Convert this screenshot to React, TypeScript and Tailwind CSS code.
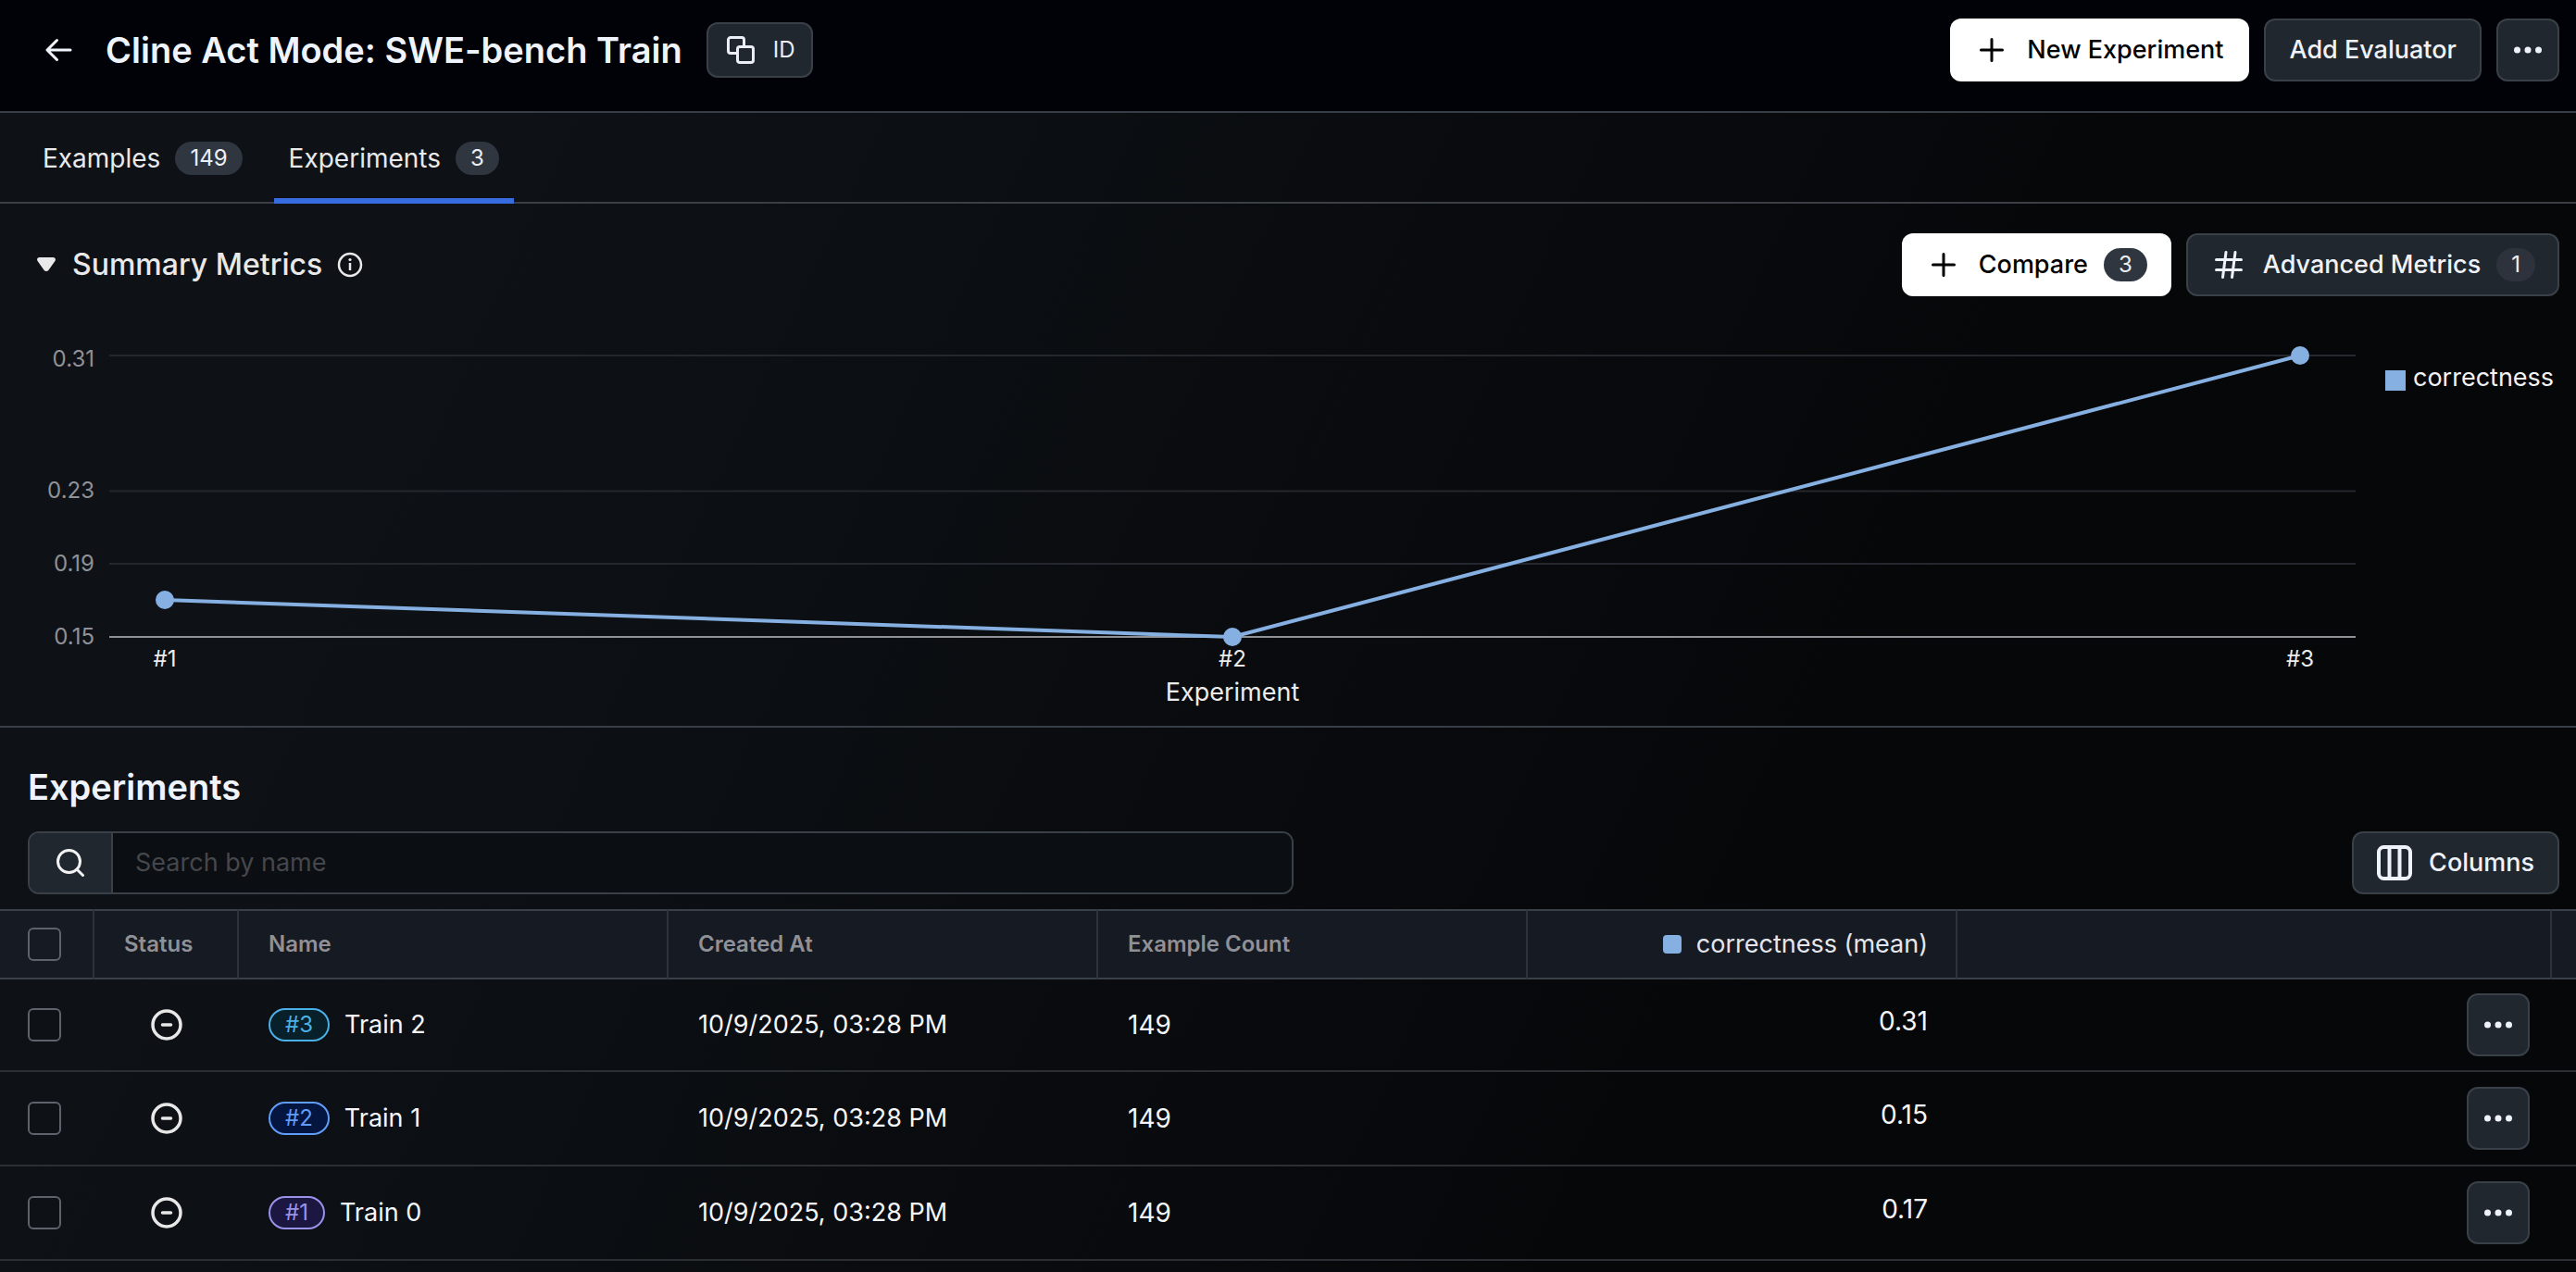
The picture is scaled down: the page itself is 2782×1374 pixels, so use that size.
import React from "react";

const rows = [
  { tag: "#3", name: "Train 2", score: "0.31", pill: "border-[#4cb0e8] bg-[#082029] text-[#4cb0e8]", h: "h-[100px]" },
  { tag: "#2", name: "Train 1", score: "0.15", pill: "border-[#609cf9] bg-[#04163f] text-[#609cf9]", h: "h-[102px]" },
  { tag: "#1", name: "Train 0", score: "0.17", pill: "border-[#9a92ea] bg-[#1b1740] text-[#9a92ea]", h: "h-[102px]" },
];

const dark =
  "flex h-[68px] items-center rounded-xl border-2 border-[#3a4048] bg-[#21272f] text-[27px] font-medium text-[#f0f2fa]";
const light = "flex h-[68px] items-center rounded-xl bg-white text-[27px] font-medium text-black";
const badge = "flex h-9 items-center justify-center rounded-full text-2xl font-normal text-[#eceef6]";

function Plus() {
  return (
    <svg width="26" height="26" viewBox="0 0 26 26" fill="none" stroke="currentColor" strokeWidth="3" strokeLinecap="round" aria-hidden="true">
      <path d="M13 1.5v23M1.5 13h23" />
    </svg>
  );
}

function Dots() {
  return (
    <svg width="30" height="8" viewBox="0 0 30 8" fill="currentColor" aria-hidden="true">
      <circle cx="3.500" cy="4" r="3.500" />
      <circle cx="15" cy="4" r="3.500" />
      <circle cx="26.500" cy="4" r="3.500" />
    </svg>
  );
}

function Check({ label }: { label: string }) {
  return (
    <input
      type="checkbox"
      aria-label={label}
      className="block size-9 appearance-none rounded-md border-2 border-[#5d626b] bg-transparent checked:bg-[#366ce0]"
    />
  );
}

function Header() {
  return (
    <header className="flex h-[122px] items-start justify-between border-b-2 border-[#383e45] bg-[#010207] pt-5 pr-[18px] pl-12">
      <div className="flex h-[68px] items-center">
        <button aria-label="Back" className="mr-9 text-[#f0f4fc]">
          <svg width="30" height="26" viewBox="0 0 30 26" fill="none" stroke="currentColor" strokeWidth="3" strokeLinecap="round" strokeLinejoin="round" aria-hidden="true">
            <path d="M28 13H3M13.500 2.500L3 13l10.500 10.500" />
          </svg>
        </button>
        <h1 className="text-[38px] font-semibold text-[#eff4fc]">Cline Act Mode: SWE-bench Train</h1>
        <button className="ml-[26px] flex h-[60px] items-center gap-5 rounded-xl border-2 border-[#3a4048] bg-[#21272f] pr-[18px] pl-5 text-2xl text-[#eceef6]">
          <svg width="30" height="30" viewBox="0 0 30 30" fill="none" stroke="currentColor" strokeWidth="3" strokeLinejoin="round" aria-hidden="true">
            <path d="M10.500 18.500H4a2.500 2.500 0 0 1-2.500-2.500V4A2.500 2.500 0 0 1 4 1.500h12A2.500 2.500 0 0 1 18.500 4v6.500" />
            <rect x="11.500" y="11.500" width="17" height="17" rx="2.500" />
          </svg>
          ID
        </button>
      </div>
      <div className="flex gap-4">
        <button className={`${light} gap-[25px] pr-7 pl-8`}>
          <Plus />
          New Experiment
        </button>
        <button className={`${dark} px-[25px]`}>Add Evaluator</button>
        <button aria-label="More actions" className={`${dark} w-[68px] justify-center`}>
          <Dots />
        </button>
      </div>
    </header>
  );
}

function Tabs() {
  return (
    <nav className="flex h-[98px] gap-[18px] border-b-2 border-[#3a3e45] pl-[30px] text-[28px] text-[#e9e9e9]">
      <a href="#examples" className="flex h-[98px] items-center gap-4 px-4">
        Examples
        <span className={`${badge} bg-[#303640] px-4`}>149</span>
      </a>
      <a href="#experiments" aria-current="page" className="flex h-[98px] items-center gap-4 border-b-6 border-[#366ce0] px-4 pt-1.5">
        Experiments
        <span className={`${badge} bg-[#303640] px-4`}>3</span>
      </a>
    </nav>
  );
}

const ticks = [
  { label: "0.31", at: "top-1" },
  { label: "0.23", at: "top-[146px]" },
  { label: "0.19", at: "top-[225px]" },
  { label: "0.15", at: "top-[304px]" },
];

function Chart() {
  return (
    <div className="flex pt-16">
      <div className="relative h-[306px] w-[118px] shrink-0 text-2xl text-[#8f9197]">
        {ticks.map((t) => (
          <span key={t.label} className={`absolute right-4 -translate-y-1/2 ${t.at}`}>
            {t.label}
          </span>
        ))}
      </div>
      <div className="min-w-0 flex-1">
        <div className="relative h-[304px]">
          <svg className="absolute inset-0 size-full overflow-visible" viewBox="0 0 2426 304" preserveAspectRatio="none" aria-label="correctness by experiment" role="img">
            <path d="M0 0H2426M0 146.500H2426M0 225H2426" stroke="#24272d" strokeWidth="2" />
            <path d="M0 304H2426" stroke="#8f9197" strokeWidth="2" />
            <path d="M60 264L1213 304L2366 0" fill="none" stroke="#86b0e1" strokeWidth="4" />
            <g fill="#86b0e1">
              <circle cx="60" cy="264" r="10" />
              <circle cx="1213" cy="304" r="10" />
              <circle cx="2366" cy="0" r="10" />
            </g>
          </svg>
        </div>
        <div className="flex justify-between px-[30px] pt-2 text-center text-2xl text-[#ececec]">
          <span className="w-[60px]">#1</span>
          <span className="w-[60px]">#2</span>
          <span className="w-[60px]">#3</span>
        </div>
        <div className="text-center text-[27px] leading-10 text-[#ececec]">Experiment</div>
      </div>
      <div className="flex w-[238px] shrink-0 items-start gap-2 pt-1 pl-8 text-[27px] leading-10 text-[#f0f2f6]">
        <span className="mt-3 size-[22px] shrink-0 bg-[#86b0e1]" />
        correctness
      </div>
    </div>
  );
}

function Summary() {
  return (
    <section className="h-[566px] border-b-2 border-[#383e45] pt-8">
      <div className="flex items-center justify-between pr-[18px] pl-10">
        <div className="flex items-center text-[#e9e9e9]">
          <button className="flex items-center gap-[18px] text-[32px] font-medium">
            <svg width="20" height="16" viewBox="0 0 20 16" fill="currentColor" aria-hidden="true">
              <path d="M2.500 0h15C19.600 0 20.700 2.200 19.400 3.900L12.300 13.900c-1.200 1.500-3.400 1.500-4.600 0L.6 3.900C-.7 2.200.4 0 2.500 0z" />
            </svg>
            Summary Metrics
          </button>
          <button aria-label="About summary metrics" className="ml-4">
            <svg width="28" height="28" viewBox="0 0 28 28" fill="none" stroke="currentColor" strokeWidth="2.500" aria-hidden="true">
              <circle cx="14" cy="14" r="12" />
              <path d="M14 12v8" />
              <circle cx="14" cy="8.500" r="1.600" fill="currentColor" stroke="none" />
            </svg>
          </button>
        </div>
        <div className="flex gap-4">
          <button className={`${light} gap-[17px] pr-[26px] pl-8`}>
            <Plus />
            <span className="ml-2">Compare</span>
            <span className={`${badge} bg-[#303640] px-4`}>3</span>
          </button>
          <button className={`${dark} gap-[17px] pr-6 pl-7`}>
            <svg width="32" height="32" viewBox="0 0 32 32" fill="none" stroke="currentColor" strokeWidth="3" strokeLinecap="round" aria-hidden="true">
              <path d="M2.500 10.500h27M2.500 21.500h27M13 2.500L9.500 29.500M23 2.500L19.500 29.500" />
            </svg>
            <span className="ml-1">Advanced Metrics</span>
            <span className={`${badge} bg-[#2d323c] px-4`}>1</span>
          </button>
        </div>
      </div>
      <Chart />
    </section>
  );
}

function Experiments() {
  const th = "border-r-2 border-[#2c323a] px-8 text-left text-2xl font-semibold text-[#8f9197]";
  return (
    <section>
      <h2 className="pt-[38px] pb-0.5 pl-[30px] text-[38px] leading-[52px] font-semibold text-[#eff4fc]">Experiments</h2>
      <div className="flex items-center justify-between pt-5 pr-[18px] pb-4 pl-[30px]">
        <form role="search" className="flex h-[68px] w-1/2 max-w-[1368px] overflow-hidden rounded-xl border-2 border-[#3a4048]">
          <button aria-label="Search" className="flex w-[90px] shrink-0 items-center justify-center border-r-2 border-[#3a4048] bg-[#21272f] text-[#f2f2f2]">
            <svg width="30" height="30" viewBox="0 0 30 30" fill="none" stroke="currentColor" strokeWidth="3" strokeLinecap="round" aria-hidden="true">
              <circle cx="13.500" cy="13.500" r="12" />
              <path d="M22 22l6.500 6.500" />
            </svg>
          </button>
          <input type="text" aria-label="Search by name" placeholder="Search by name" className="min-w-0 flex-1 bg-[#0b0e13] px-6 text-[27px] text-white outline-none placeholder:text-[#45474b]" />
        </form>
        <button className={`${dark} gap-[18px] px-[25px]`}>
          <svg width="38" height="38" viewBox="0 0 38 38" fill="none" stroke="currentColor" strokeWidth="4" aria-hidden="true">
            <rect x="2" y="2" width="34" height="34" rx="5.500" />
            <path d="M13.500 2v34M24.500 2v34" />
          </svg>
          Columns
        </button>
      </div>
      <table className="w-full table-fixed border-separate border-spacing-0">
        <colgroup>
          <col className="w-[102px]" />
          <col className="w-[156px]" />
          <col className="w-[464px]" />
          <col className="w-[464px]" />
          <col className="w-[464px]" />
          <col className="w-[464px]" />
          <col />
          <col className="w-[26px]" />
        </colgroup>
        <thead className="bg-[#161a23]">
          <tr className="h-[76px] *:border-y-2 *:border-y-[#3a4048]">
            <th className="border-r-2 border-[#2c323a] pl-[30px]">
              <Check label="Select all experiments" />
            </th>
            <th className={th}>Status</th>
            <th className={th}>Name</th>
            <th className={th}>Created At</th>
            <th className={th}>Example Count</th>
            <th className="border-r-2 border-[#2c323a] px-[30px] text-[27px] font-normal text-[#e4e6ec]">
              <span className="flex items-center justify-end gap-4">
                <span className="size-5 rounded bg-[#86b0e1]" />
                correctness (mean)
              </span>
            </th>
            <th className="border-r-2 border-[#2c323a]" />
            <th />
          </tr>
        </thead>
        <tbody className="text-[27px] text-[#f4f6fa]">
          {rows.map((r) => (
            <tr key={r.tag} className={`${r.h} *:border-b-2 *:border-[#2b2f34]`}>
              <td className="pl-[30px]">
                <Check label={`Select ${r.name}`} />
              </td>
              <td className="pl-[61px]">
                <svg width="34" height="34" viewBox="0 0 34 34" fill="none" stroke="#e8e8e8" strokeWidth="3.500" strokeLinecap="round" role="img" aria-label="No status">
                  <circle cx="17" cy="17" r="15" />
                  <path d="M12.500 17h9" />
                </svg>
              </td>
              <td className="px-8">
                <div className="flex items-center gap-4">
                  <span className={`flex h-9 items-center rounded-full border-2 px-4 text-2xl ${r.pill}`}>{r.tag}</span>
                  {r.name}
                </div>
              </td>
              <td className="px-8">10/9/2025, 03:28 PM</td>
              <td className="px-8 text-[28px]">149</td>
              <td className="px-8 pb-2 text-right text-[28px]">{r.score}</td>
              <td colSpan={2}>
                <button aria-label={`Actions for ${r.name}`} className={`${dark} mr-[50px] ml-auto w-[68px] justify-center`}>
                  <Dots />
                </button>
              </td>
            </tr>
          ))}
        </tbody>
      </table>
    </section>
  );
}

export default function App() {
  return (
    <main className="min-h-screen bg-[linear-gradient(115deg,#0e1217_0%,#0e1217_18%,#060709_70%)] font-['Inter',sans-serif]">
      <Header />
      <Tabs />
      <Summary />
      <Experiments />
    </main>
  );
}
